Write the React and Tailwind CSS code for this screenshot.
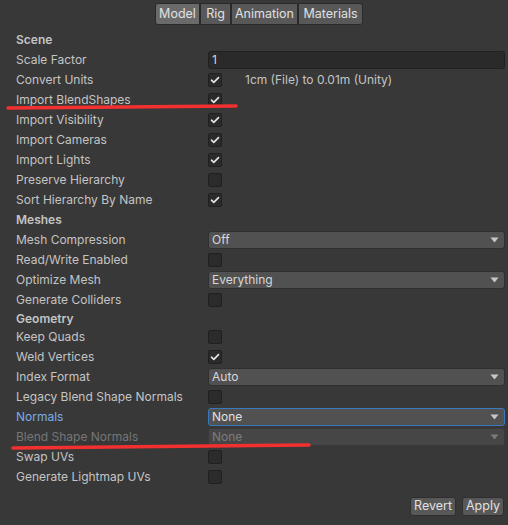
import React from "react";

const Check = () => (
  <svg width="10" height="10" viewBox="0 0 10 10" className="block">
    <path d="M1.5 5.2 L3.8 7.4 L8.5 2.6" stroke="#e6e6e6" strokeWidth="1.6" fill="none" strokeLinecap="round" strokeLinejoin="round" />
  </svg>
);

const Checkbox = ({ checked }) => (
  <div className="w-[14px] h-[14px] rounded-[2px] bg-[#2b2b2b] border border-[#202020] flex items-center justify-center">
    {checked && <Check />}
  </div>
);

const Arrow = ({ dim }) => (
  <svg width="9" height="6" viewBox="0 0 9 6" className="block">
    <path d="M0.5 0.5 L8.5 0.5 L4.5 5.5 Z" fill={dim ? "#7a7a7a" : "#c8c8c8"} />
  </svg>
);

const Dropdown = ({ value, focus, disabled }) => (
  <div
    className={
      "flex-1 h-[18px] rounded-[3px] flex items-center justify-between pl-[3px] pr-[5px] " +
      (disabled
        ? "bg-[#464646] border border-[#3a3a3a] text-[#7c7c7c]"
        : focus
        ? "bg-[#515151] border border-[#3a79bb] text-[#e0e0e0]"
        : "bg-[#515151] border border-[#303030] text-[#d8d8d8]")
    }
  >
    <span>{value}</span>
    <Arrow dim={disabled} />
  </div>
);

const Row = ({ label, children, labelClass = "text-[#c4c4c4]", h = "h-[20px]" }) => (
  <div className={"flex items-center " + h}>
    <div className={"w-[208px] pl-[16px] shrink-0 " + labelClass}>{label}</div>
    <div className="flex-1 flex items-center pr-[3px]">{children}</div>
  </div>
);

const Header = ({ label, h = "h-[20px]" }) => (
  <div className={"flex items-center pl-[16px] font-semibold text-[#c4c4c4] " + h}>{label}</div>
);

const tabs = [
  { t: "Model", w: "w-[45px]", cls: "bg-[#6a6a6a] rounded-l-[3px]" },
  { t: "Rig", w: "w-[31px]", cls: "bg-[#585858]" },
  { t: "Animation", w: "w-[67px]", cls: "bg-[#585858]" },
  { t: "Materials", w: "w-[65px]", cls: "bg-[#585858] rounded-r-[3px]" },
];

export default function App() {
  return (
    <div
      className="relative w-[508px] h-[525px] bg-[#383838] text-[12px] overflow-hidden"
      style={{ fontFamily: "Inter, 'Noto Sans', sans-serif" }}
    >
      <div className="h-[30px] flex pt-[3px] pl-[155px]">
        <div className="flex h-[22px]">
          {tabs.map(({ t, w, cls }) => (
            <div
              key={t}
              className={
                "flex items-center justify-center border border-[#2a2a2a] text-[12.5px] text-[#e0e0e0] " + w + " " + cls
              }
            >
              {t}
            </div>
          ))}
        </div>
      </div>

      <Header label="Scene" />
      <Row label="Scale Factor">
        <div className="flex-1 h-[18px] bg-[#2a2a2a] border border-[#212121] rounded-[3px] flex items-center pl-[3px] text-[#d8d8d8]">1</div>
      </Row>
      <Row label="Convert Units">
        <Checkbox checked />
        <span className="ml-[23px] text-[#c4c4c4]">1cm (File) to 0.01m (Unity)</span>
      </Row>
      <Row label="Import BlendShapes"><Checkbox checked /></Row>
      <Row label="Import Visibility"><Checkbox checked /></Row>
      <Row label="Import Cameras"><Checkbox checked /></Row>
      <Row label="Import Lights"><Checkbox checked /></Row>
      <Row label="Preserve Hierarchy"><Checkbox /></Row>
      <Row label="Sort Hierarchy By Name"><Checkbox checked /></Row>

      <Header label="Meshes" />
      <Row label="Mesh Compression"><Dropdown value="Off" /></Row>
      <Row label="Read/Write Enabled"><Checkbox /></Row>
      <Row label="Optimize Mesh"><Dropdown value="Everything" /></Row>
      <Row label="Generate Colliders"><Checkbox /></Row>

      <Header label="Geometry" h="h-[17px]" />
      <Row label="Keep Quads"><Checkbox /></Row>
      <Row label="Weld Vertices"><Checkbox checked /></Row>
      <Row label="Index Format"><Dropdown value="Auto" /></Row>
      <Row label="Legacy Blend Shape Normals"><Checkbox /></Row>
      <Row label="Normals" labelClass="text-[#7babe8]"><Dropdown value="None" focus /></Row>
      <Row label="Blend Shape Normals" labelClass="text-[#767676]"><Dropdown value="None" disabled /></Row>
      <Row label="Swap UVs"><Checkbox /></Row>
      <Row label="Generate Lightmap UVs"><Checkbox /></Row>

      <div className="flex justify-end gap-[6px] pr-[4px] mt-[10px]">
        <div className="h-[19px] w-[46px] flex items-center justify-center rounded-[3px] bg-[#585858] border border-[#2f2f2f] text-[#e0e0e0] text-[12.5px]">Revert</div>
        <div className="h-[19px] w-[42px] flex items-center justify-center rounded-[3px] bg-[#585858] border border-[#2f2f2f] text-[#e0e0e0] text-[12.5px]">Apply</div>
      </div>

      <svg className="absolute left-0 top-0 pointer-events-none" width="508" height="525">
        <path d="M8 108 L236 106" stroke="#f23030" strokeWidth="3.5" strokeLinecap="round" fill="none" />
        <path d="M13 448 L309 445" stroke="#f23030" strokeWidth="3.5" strokeLinecap="round" fill="none" />
      </svg>
    </div>
  );
}
